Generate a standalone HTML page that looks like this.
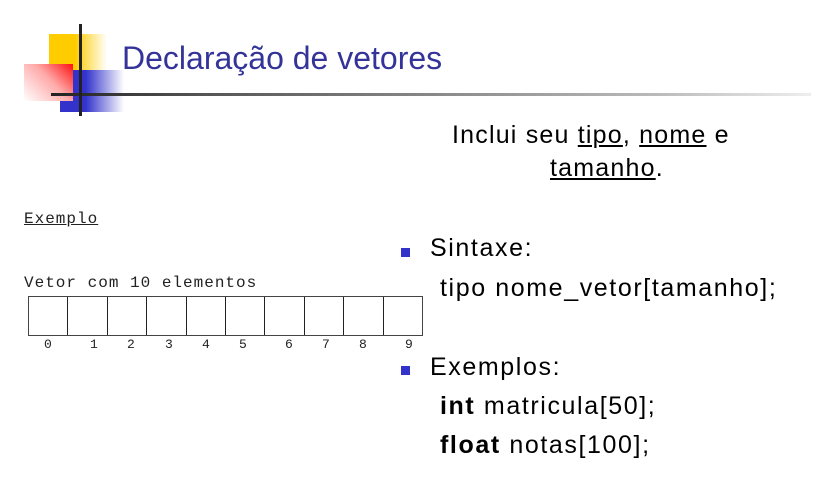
<!DOCTYPE html>
<html><head><meta charset="utf-8"><style>
body{margin:0;width:820px;height:488px;background:#fff;position:relative;overflow:hidden;font-family:"Liberation Sans",sans-serif}
.a{position:absolute;white-space:nowrap}
.m{font-family:"Liberation Mono",monospace;font-size:16px;letter-spacing:1px;color:#222}
.t{font-size:25px;color:#000;letter-spacing:1.6px}
.b{position:absolute;width:9px;height:9px;background:#3333cc}
.cells{position:absolute;left:28px;top:296px;width:395px;height:40px;border:1px solid #444;display:flex;box-sizing:border-box}
.cells div{flex:1;border-right:1px solid #222}
.cells div:last-child{border-right:none}
.n{position:absolute;top:337px;font-family:"Liberation Mono",monospace;font-size:13px;color:#222}
</style></head><body>
<div class="a" style="left:49px;top:34px;width:58px;height:36px;background:linear-gradient(90deg,#ffcc00 0,#ffcc00 45%,#fff 100%)"></div>
<div class="a" style="left:60px;top:70px;width:64px;height:42px;background:linear-gradient(90deg,#3333cc 0,#3333cc 40%,#fff 100%)"></div>
<div class="a" style="left:24px;top:64px;width:49px;height:37px;background:linear-gradient(225deg,#ff1111 0,#ffaaaa 45%,#fff 100%)"></div>
<div class="a" style="left:51px;top:93px;width:760px;height:3px;background:linear-gradient(90deg,#222 0,#555 20%,#bbb 80%,#eee 100%)"></div>
<div class="a" style="left:79px;top:24px;width:3px;height:92px;background:#222"></div>
<div class="a" style="left:122px;top:40px;font-size:32px;color:#333399;letter-spacing:0">Declaração de vetores</div>

<div class="a m" style="left:24px;top:210px;text-decoration:underline">Exemplo</div>
<div class="a m" style="left:24px;top:274px">Vetor com 10 elementos</div>
<div class="cells"><div></div><div></div><div></div><div></div><div></div><div></div><div></div><div></div><div></div><div></div></div>
<div class="n" style="left:44px">0</div><div class="n" style="left:90px">1</div><div class="n" style="left:127px">2</div><div class="n" style="left:165px">3</div><div class="n" style="left:202px">4</div><div class="n" style="left:239px">5</div><div class="n" style="left:285px">6</div><div class="n" style="left:322px">7</div><div class="n" style="left:359px">8</div><div class="n" style="left:405px">9</div>

<div class="a t" style="left:452px;top:121px;letter-spacing:1.2px">Inclui seu <u>tipo</u>, <u>nome</u> e</div>
<div class="a t" style="left:550px;top:154px;letter-spacing:1.2px"><u>tamanho</u>.</div>
<div class="b" style="left:401px;top:248px"></div>
<div class="a t" style="left:430px;top:234px">Sintaxe:</div>
<div class="a t" style="left:440px;top:274px">tipo nome_vetor[tamanho];</div>
<div class="b" style="left:401px;top:366px"></div>
<div class="a t" style="left:430px;top:353px">Exemplos:</div>
<div class="a t" style="left:440px;top:392px"><b>int</b> matricula[50];</div>
<div class="a t" style="left:440px;top:431px"><b>float</b> notas[100];</div>
</body></html>
